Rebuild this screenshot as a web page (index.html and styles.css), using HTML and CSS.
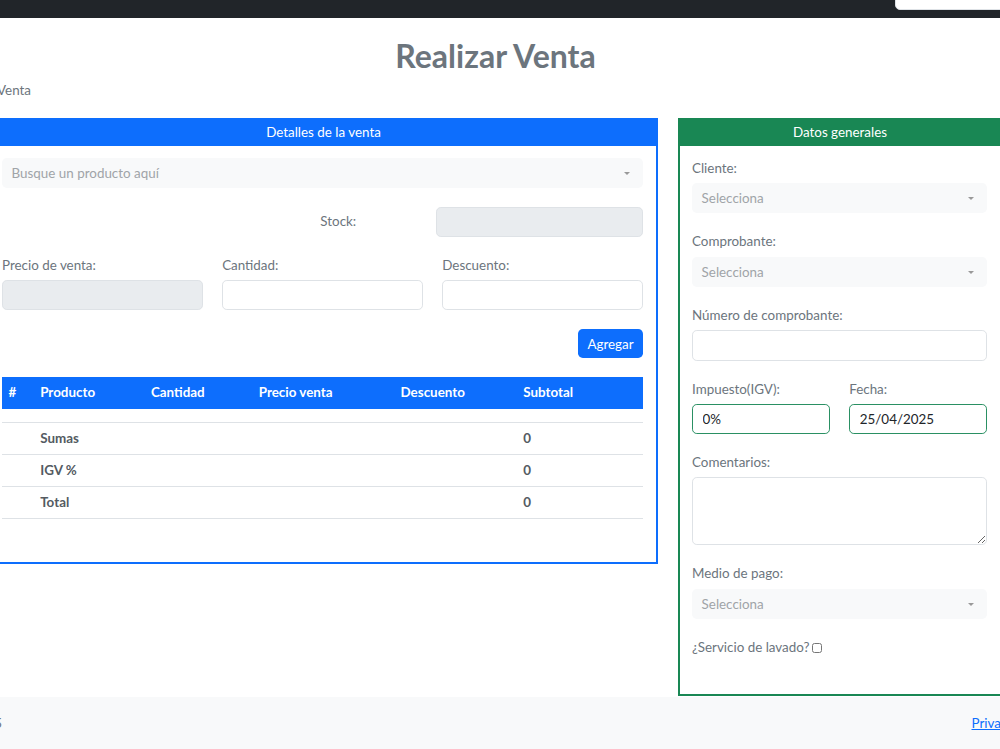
FILE: index.html
```html
<!DOCTYPE html>
<html lang="es">
<head>
  <meta charset="UTF-8">
  <meta name="viewport" content="width=device-width, initial-scale=1">
  <title>Realizar Venta</title>
  <link rel="stylesheet" href="styles.css">
</head>
<body>

<nav class="topbar">
  <input class="search" type="text" placeholder="Buscar ...">
</nav>

<div class="layout">
  <h1 class="title">Realizar Venta</h1>
  <div class="crumbs">Venta</div>

  <div class="sale-grid">
    <!-- Detalles de la venta -->
    <section class="card card-blue">
      <div class="card-header">Detalles de la venta</div>
      <div class="card-body sale-body">
        <div class="fake-select">Busque un producto aquí<span class="caret"></span></div>

        <div class="stock-row">
          <label class="stock-label">Stock:</label>
          <input class="field field-disabled stock-input" type="text" disabled>
        </div>

        <div class="three-cols">
          <div>
            <label class="form-label">Precio de venta:</label>
            <input class="field field-disabled" type="text" disabled>
          </div>
          <div>
            <label class="form-label">Cantidad:</label>
            <input class="field" type="text">
          </div>
          <div>
            <label class="form-label">Descuento:</label>
            <input class="field" type="text">
          </div>
        </div>

        <div class="actions">
          <button class="btn-primary">Agregar</button>
        </div>

        <table class="detail-table">
          <thead>
            <tr>
              <th>#</th>
              <th>Producto</th>
              <th>Cantidad</th>
              <th>Precio venta</th>
              <th>Descuento</th>
              <th>Subtotal</th>
            </tr>
          </thead>
          <tbody>
            <tr class="empty"><td></td><td></td><td></td><td></td><td></td><td></td></tr>
          </tbody>
          <tfoot>
            <tr><td></td><th>Sumas</th><td></td><td></td><td></td><th>0</th></tr>
            <tr><td></td><th>IGV %</th><td></td><td></td><td></td><th>0</th></tr>
            <tr><td></td><th>Total</th><td></td><td></td><td></td><th>0</th></tr>
          </tfoot>
        </table>
      </div>
    </section>

    <!-- Datos generales -->
    <section class="card card-green">
      <div class="card-header">Datos generales</div>
      <div class="card-body general-body">
        <div>
          <label class="form-label">Cliente:</label>
          <div class="fake-select">Selecciona<span class="caret"></span></div>
        </div>
        <div>
          <label class="form-label">Comprobante:</label>
          <div class="fake-select">Selecciona<span class="caret"></span></div>
        </div>
        <div>
          <label class="form-label">Número de comprobante:</label>
          <input class="field" type="text">
        </div>
        <div class="two-cols">
          <div>
            <label class="form-label">Impuesto(IGV):</label>
            <input class="field field-success" type="text" value="0%">
          </div>
          <div>
            <label class="form-label">Fecha:</label>
            <input class="field field-success" type="text" value="25/04/2025">
          </div>
        </div>
        <div>
          <label class="form-label">Comentarios:</label>
          <textarea class="field comments"></textarea>
        </div>
        <div>
          <label class="form-label">Medio de pago:</label>
          <div class="fake-select">Selecciona<span class="caret"></span></div>
        </div>
        <div class="check-row">
          <label>¿Servicio de lavado?</label>
          <input class="check" type="checkbox">
        </div>
      </div>
    </section>
  </div>
</div>

<footer class="footer">
  <div class="footer-inner">
    <div class="copy">Copyright &copy; Your Website 2025</div>
    <div class="links"><a href="#">Privacy Policy</a> &middot; <a href="#">Terms &amp; Conditions</a></div>
  </div>
</footer>

</body>
</html>
```

FILE: styles.css
```css
body {
  margin: 0;
  font-family: 'Lato', 'Open Sans', sans-serif;
  font-size: 13.4px;
  line-height: 19.2px;
  color: #212529;
  background: #fff;
  overflow: hidden;
}

/* barra superior */
.topbar {
  height: 18px;
  background: #212529;
  display: flex;
  justify-content: flex-end;
  overflow: hidden;
}

.search {
  width: 120px;
  height: 30px;
  margin-top: -20px;
  margin-right: -15px;
  border: 1px solid #dee2e6;
  border-radius: 5px;
  padding: 0 10px;
  font-family: inherit;
  font-size: 13px;
  box-sizing: border-box;
}

.layout {
  margin-left: -11px;
  width: 1013px;
}

.title {
  margin: 19px 0 6px;
  text-align: center;
  font-size: 32px;
  line-height: 38.4px;
  font-weight: 700;
  color: #6c757d;
}

.crumbs {
  padding-left: 8px;
  color: #6c757d;
  margin-bottom: 17px;
}

.sale-grid {
  display: grid;
  grid-template-columns: 669px 324px;
  column-gap: 20px;
  align-items: start;
}

.card {
  border: 2px solid;
  background: #fff;
}

.card-blue { border-color: #0d6efd; }
.card-green { border-color: #198754; }

.card-header {
  color: #fff;
  text-align: center;
  padding: 3px 0 4px;
}

.card-blue .card-header { background: #0d6efd; }
.card-green .card-header { background: #198754; }

.card-body {
  padding: 11.8px 12.8px 12.8px 11px;
}

.sale-body {
  display: grid;
  gap: 19px;
  padding-bottom: 43px;
}

.general-body {
  display: grid;
  gap: 19px;
  padding-top: 13px;
  padding-left: 12px;
  padding-bottom: 37px;
}

.form-label {
  display: block;
  color: #6c757d;
  margin-bottom: 5px;
}

.field {
  display: block;
  width: 100%;
  height: 30.4px;
  box-sizing: border-box;
  border: 1px solid #dee2e6;
  border-radius: 4.8px;
  padding: 0 9.6px;
  font-family: inherit;
  font-size: 13.4px;
  color: #212529;
  background: #fff;
}

.field-disabled {
  background: #e9ecef;
}

.field-success {
  border-color: #2a9063;
}

.comments {
  height: 68px;
  resize: vertical;
}

.fake-select {
  position: relative;
  height: 30.4px;
  line-height: 30.4px;
  padding: 0 9.6px;
  background: #f8f9fa;
  border-radius: 4.8px;
  color: #a0a4a8;
}

.caret {
  position: absolute;
  right: 13px;
  top: 14px;
  border-left: 3px solid transparent;
  border-right: 3px solid transparent;
  border-top: 3px solid #999;
}

.stock-row {
  display: flex;
  align-items: center;
  justify-content: flex-end;
}

.stock-label {
  color: #6c757d;
  margin-right: 80px;
}

.stock-input {
  width: 207px;
  height: 29.5px;
}

.three-cols {
  display: grid;
  grid-template-columns: 1fr 1fr 1fr;
  gap: 19.2px;
}

.two-cols {
  display: grid;
  grid-template-columns: 1fr 1fr;
  gap: 19.2px;
}

.actions {
  display: flex;
  justify-content: flex-end;
}

.btn-primary {
  height: 29px;
  padding: 0 9.6px;
  background: #0d6efd;
  color: #fff;
  border: none;
  border-radius: 4.8px;
  font-family: inherit;
  font-size: 13.4px;
}

/* tabla de detalle */
.detail-table {
  width: 100%;
  border-collapse: collapse;
  table-layout: fixed;
}

.detail-table th,
.detail-table td {
  padding: 6px 6.4px;
  text-align: left;
  line-height: 19.2px;
}

.detail-table thead th {
  padding: 6.2px 6.4px;
  background: #0d6efd;
  color: #fff;
  font-weight: 700;
}

.detail-table th:nth-child(1) { width: 19px; }
.detail-table th:nth-child(2) { width: 98px; }
.detail-table th:nth-child(3) { width: 95px; }
.detail-table th:nth-child(4) { width: 129px; }
.detail-table th:nth-child(5) { width: 110px; }

.detail-table tbody td,
.detail-table tfoot td,
.detail-table tfoot th {
  border-bottom: 1px solid #dee2e6;
}

.detail-table tr.empty td {
  height: 0;
  line-height: 0;
  padding: 6.4px 6.4px 6.5px;
}

.detail-table tfoot th {
  color: #545b62;
  font-weight: 700;
}

.check-row {
  display: flex;
  align-items: center;
  gap: 3px;
  color: #6c757d;
}

.check {
  width: 10px;
  height: 10px;
  margin: 0;
}

.footer {
  margin-top: 1px;
  background: #f8f9fa;
  padding: 17px 0 30px;
}

.footer-inner {
  display: flex;
  justify-content: space-between;
  margin-left: -186px;
  width: 1363px;
  color: #6c757d;
}

.footer-inner a {
  color: #0d6efd;
}
```
